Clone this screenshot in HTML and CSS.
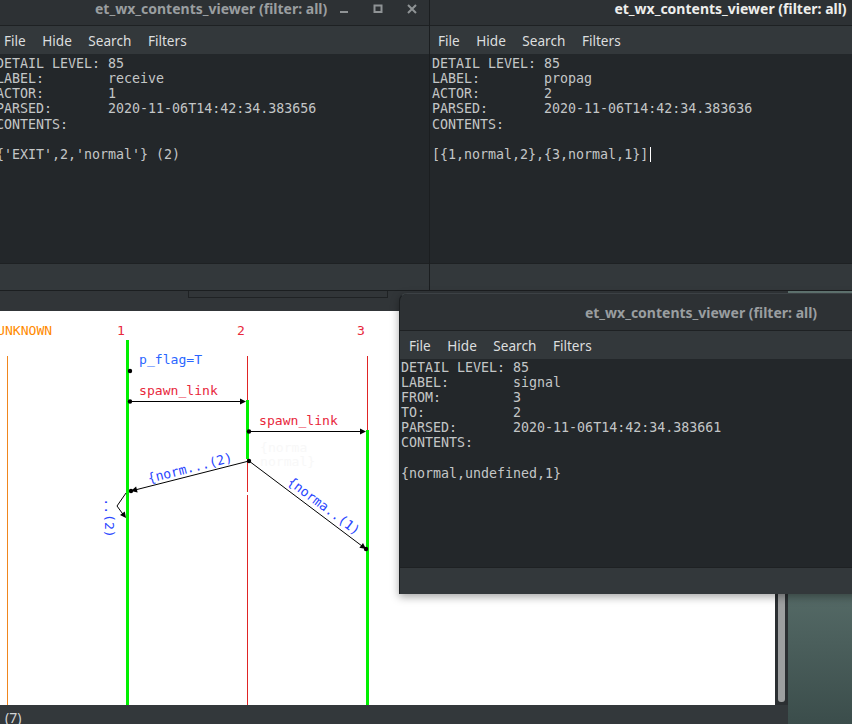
FILE: index.html
```html
<!DOCTYPE html>
<html>
<head>
<meta charset="utf-8">
<link rel="stylesheet" href="styles.css">
</head>
<body>
<div class="desktop">

  <div class="diagram">
    <div class="dg-toolbar">
      <div class="slider"><span>0</span><span>100</span></div>
    </div>
    <div class="dg-body">
      <div class="canvas">
        <svg width="775" height="394" viewBox="0 0 775 394" xmlns="http://www.w3.org/2000/svg">
          <g class="mono">
            <text x="-3" y="24" fill="#ff8a00">UNKNOWN</text>
            <text x="117" y="24" fill="#e8283c">1</text>
            <text x="237" y="24" fill="#e8283c">2</text>
            <text x="357" y="24" fill="#e8283c">3</text>
          </g>
          <line x1="7.5" y1="45" x2="7.5" y2="394" stroke="#f0861e" stroke-width="1"/>
          <line x1="247.5" y1="45" x2="247.5" y2="394" stroke="#e02424" stroke-width="1"/>
          <rect x="246" y="181" width="3" height="3" fill="#ffffff"/>
          <line x1="367.5" y1="45" x2="367.5" y2="120" stroke="#e02424" stroke-width="1"/>
          <rect x="126" y="29" width="3" height="365" fill="#00f000"/>
          <rect x="246" y="89" width="3" height="59" fill="#00f000"/>
          <rect x="366" y="119" width="3" height="275" fill="#00f000"/>

          <g class="mono">
            <text x="139" y="53" fill="#2a66ff">p_flag=T</text>
            <text x="139" y="84" fill="#e8283c">spawn_link</text>
            <text x="259" y="114" fill="#e8283c">spawn_link</text>
            <text x="260" y="141" fill="#f8f8f8">{norma</text>
            <text x="260" y="155" fill="#f8f8f8">normal}</text>
          </g>

          <g stroke="#000" stroke-width="1" fill="none">
            <line x1="130" y1="90.5" x2="244" y2="90.5"/>
            <line x1="249" y1="120.5" x2="364" y2="120.5"/>
            <line x1="249" y1="150" x2="133" y2="179.5"/>
            <line x1="249" y1="150" x2="364" y2="236.5"/>
            <polyline points="126,182 117,195 125,206"/>
          </g>
          <g fill="#000">
            <circle cx="130" cy="60" r="2.2"/>
            <circle cx="130" cy="90.5" r="2.2"/>
            <circle cx="249" cy="120.5" r="2.2"/>
            <circle cx="249" cy="150" r="2.2"/>
            <circle cx="131" cy="180" r="2.2"/>
            <circle cx="366" cy="238" r="2.2"/>
            <polygon points="246,90.5 240,87.5 240,93.5"/>
            <polygon points="366,120.5 360,117.5 360,123.5"/>
            <polygon points="131,180 137.6,181.4 136.1,175.6"/>
            <polygon points="366,238 359.4,236.8 363,232"/>
            <polygon points="126,207 120,204 124.8,200.4"/>
          </g>
          <g class="mono" fill="#2a46ff">
            <text transform="translate(190 157) rotate(-14.3)" text-anchor="middle" dominant-baseline="central">{norm...(2)</text>
            <text transform="translate(324 195) rotate(37)" text-anchor="middle" dominant-baseline="central">{norma..(1)</text>
            <text transform="translate(109 207) rotate(90)" text-anchor="middle" dominant-baseline="central">..(2)</text>
          </g>
        </svg>
      </div>
      <div class="vscroll"><div class="thumb"></div></div>
    </div>
    <div class="dg-status">(7)</div>
  </div>

  <div class="viewer tl">
    <div class="titlebar">
      <span class="title">et_wx_contents_viewer (filter: all)</span>
      <div class="wbtns">
        <svg width="16" height="16" viewBox="0 0 16 16"><rect x="4" y="10" width="8" height="2" fill="#8f9395"/></svg>
        <svg width="16" height="16" viewBox="0 0 16 16"><rect x="4.5" y="4.5" width="7" height="6.5" fill="none" stroke="#8f9395" stroke-width="2"/></svg>
        <svg width="16" height="16" viewBox="0 0 16 16"><path d="M4 4 L12 12 M12 4 L4 12" stroke="#8f9395" stroke-width="2"/></svg>
      </div>
    </div>
    <div class="menubar"><span>File</span><span>Hide</span><span>Search</span><span>Filters</span></div>
    <pre class="content">DETAIL LEVEL: 85
LABEL:        receive
ACTOR:        1
PARSED:       2020-11-06T14:42:34.383656
CONTENTS:

{'EXIT',2,'normal'} (2)</pre>
    <div class="statusbar"></div>
  </div>

  <div class="viewer tr active">
    <div class="titlebar">
      <span class="title">et_wx_contents_viewer (filter: all)</span>
    </div>
    <div class="menubar"><span>File</span><span>Hide</span><span>Search</span><span>Filters</span></div>
    <pre class="content">DETAIL LEVEL: 85
LABEL:        propag
ACTOR:        2
PARSED:       2020-11-06T14:42:34.383636
CONTENTS:

[{1,normal,2},{3,normal,1}]<span class="caret"></span></pre>
    <div class="statusbar"></div>
  </div>

  <div class="viewer sig">
    <div class="titlebar">
      <span class="title">et_wx_contents_viewer (filter: all)</span>
    </div>
    <div class="menubar"><span>File</span><span>Hide</span><span>Search</span><span>Filters</span></div>
    <pre class="content">DETAIL LEVEL: 85
LABEL:        signal
FROM:         3
TO:           2
PARSED:       2020-11-06T14:42:34.383661
CONTENTS:

{normal,undefined,1}</pre>
    <div class="statusbar"></div>
  </div>

</div>
</body>
</html>
```

FILE: styles.css
```css
html, body {
  margin: 0;
  padding: 0;
}
body {
  width: 852px;
  height: 724px;
  overflow: hidden;
  background: linear-gradient(to bottom, #6a7f7b 0px, #5b716d 560px, #3b4d4b 724px);
  font-family: "Noto Sans", "DejaVu Sans", sans-serif;
}
.desktop {
  position: relative;
  width: 852px;
  height: 724px;
  overflow: hidden;
}

/* ---------- diagram window (background) ---------- */
.diagram {
  position: absolute;
  left: 0;
  top: 270px;
  width: 788px;
  height: 454px;
  display: flex;
  flex-direction: column;
  background: #313538;
}
.dg-toolbar {
  height: 41px;
  flex: none;
  background: #313538;
}
.slider {
  margin-left: 188px;
  width: 200px;
  height: 28px;
  border: 1px solid #1f2224;
  border-top: none;
  display: flex;
  justify-content: space-between;
  align-items: flex-end;
  padding: 0 3px 4px 4px;
  box-sizing: border-box;
  color: #d8dadb;
  font-size: 13px;
  line-height: 13px;
}
.dg-body {
  height: 394px;
  flex: none;
  display: flex;
}
.canvas {
  width: 775px;
  height: 394px;
  background: #ffffff;
  overflow: hidden;
}
.canvas svg {
  display: block;
}
.mono {
  font-family: "DejaVu Sans Mono", monospace;
  font-size: 13.1px;
}
.vscroll {
  width: 13px;
  flex: none;
  background: #2b2f32;
  display: flex;
  padding: 2px 3px 3px 3px;
  box-sizing: border-box;
}
.thumb {
  flex: 1;
  background: #9d9fa0;
  border-radius: 3px;
}
.dg-status {
  height: 19px;
  flex: none;
  background: #33383b;
  color: #d2d4d5;
  font-size: 14px;
  line-height: 16px;
  padding: 5px 0 0 5px;
  box-sizing: border-box;
}

/* ---------- viewer windows ---------- */
.viewer {
  position: absolute;
  display: flex;
  flex-direction: column;
  background: #23272a;
  overflow: hidden;
}
.tl {
  left: -6px;
  top: -12px;
  width: 435px;
  height: 303px;
  border-bottom: 1px solid #1b1e20;
  box-sizing: border-box;
}
.tr {
  left: 429px;
  top: -12px;
  width: 602px;
  height: 303px;
  border-left: 1px solid #1b1e20;
  border-bottom: 1px solid #1b1e20;
  box-sizing: border-box;
}
.sig {
  left: 399px;
  top: 293px;
  width: 603px;
  height: 301px;
  border-left: 1px solid #1b1e20;
  border-top: 1px solid #3c4145;
  border-radius: 8px 0 0 0;
  box-sizing: border-box;
  box-shadow: 0 3px 8px rgba(0, 0, 0, 0.35);
}
.titlebar {
  height: 38px;
  flex: none;
  background: #2d3134;
  border-bottom: 1px solid #1e2123;
  box-sizing: border-box;
  display: flex;
  align-items: center;
  padding-top: 3px;
  font-size: 14px;
  font-weight: bold;
  color: #9a9ea0;
  white-space: nowrap;
}
.sig .titlebar {
  height: 37px;
  padding-top: 0;
}
.tl .titlebar {
  padding-left: 101px;
  padding-right: 9px;
}
.tr .titlebar,
.sig .titlebar {
  justify-content: center;
}
.active .titlebar {
  color: #eeeeec;
}
.wbtns {
  margin-left: auto;
  display: flex;
  gap: 18px;
  padding-top: 1px;
}
.wbtns svg {
  display: block;
}
.menubar {
  height: 28px;
  flex: none;
  background: #33383b;
  display: flex;
  align-items: center;
  gap: 16.5px;
  font-size: 13.6px;
  color: #dcdedf;
  padding-left: 10px;
  box-sizing: border-box;
}
.tr .menubar {
  padding-left: 8px;
}
.sig .menubar {
  padding-left: 9px;
}
.content {
  flex: 1;
  margin: 0;
  padding: 2px 0 0 2px;
  font-family: "DejaVu Sans Mono", monospace;
  font-size: 13.3px;
  line-height: 15.15px;
  color: #c3c6c7;
  background: #23272a;
  white-space: pre;
  overflow: hidden;
}
.sig .content {
  padding-top: 1px;
  padding-left: 1px;
  line-height: 15.1px;
}
.caret {
  display: inline-block;
  width: 1px;
  height: 15px;
  background: #ffffff;
  vertical-align: -3px;
  margin-left: 2px;
}
.statusbar {
  height: 27px;
  flex: none;
  background: #33383b;
  border-top: 1px solid #1e2123;
  box-sizing: border-box;
}
```
